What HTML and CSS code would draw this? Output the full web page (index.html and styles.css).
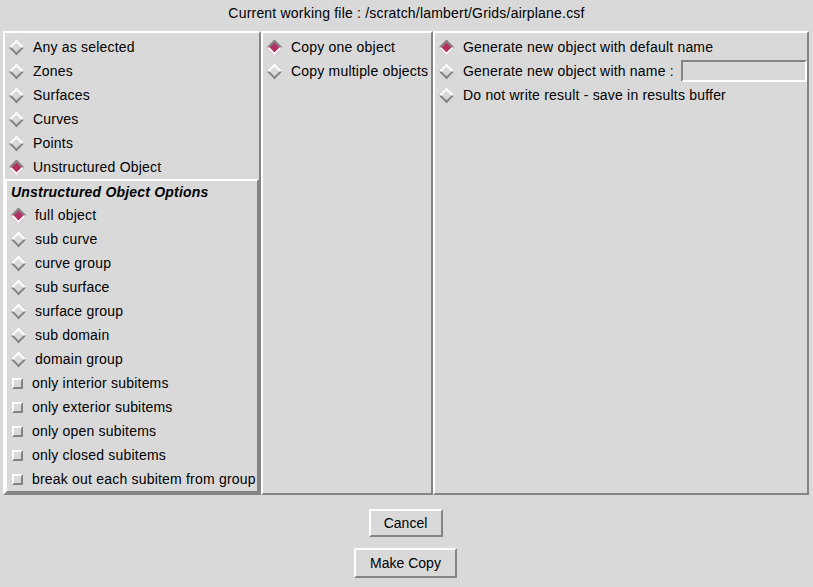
FILE: index.html
```html
<!DOCTYPE html>
<html lang="en">
<head>
    <meta charset="UTF-8">
    <title>Copy Object</title>
    <link rel="stylesheet" href="styles.css">
</head>
<body>
    <div class="title">Current working file : /scratch/lambert/Grids/airplane.csf</div>

    <div class="main">
        <div class="panel panel-left">
            <div class="list">
                <div class="item"><span class="radio"></span>Any as selected</div>
                <div class="item"><span class="radio"></span>Zones</div>
                <div class="item"><span class="radio"></span>Surfaces</div>
                <div class="item"><span class="radio"></span>Curves</div>
                <div class="item"><span class="radio"></span>Points</div>
                <div class="item"><span class="radio on"></span>Unstructured Object</div>
            </div>
            <div class="options">
                <div class="options-title">Unstructured Object Options</div>
                <div class="item"><span class="radio on"></span>full object</div>
                <div class="item"><span class="radio"></span>sub curve</div>
                <div class="item"><span class="radio"></span>curve group</div>
                <div class="item"><span class="radio"></span>sub surface</div>
                <div class="item"><span class="radio"></span>surface group</div>
                <div class="item"><span class="radio"></span>sub domain</div>
                <div class="item"><span class="radio"></span>domain group</div>
                <div class="item"><span class="check"></span>only interior subitems</div>
                <div class="item"><span class="check"></span>only exterior subitems</div>
                <div class="item"><span class="check"></span>only open subitems</div>
                <div class="item"><span class="check"></span>only closed subitems</div>
                <div class="item"><span class="check"></span>break out each subitem from group</div>
            </div>
        </div>

        <div class="panel panel-mid">
            <div class="list">
                <div class="item"><span class="radio on"></span>Copy one object</div>
                <div class="item"><span class="radio"></span>Copy multiple objects</div>
            </div>
        </div>

        <div class="panel panel-right">
            <div class="list">
                <div class="item"><span class="radio on"></span>Generate new object with default name</div>
                <div class="item"><span class="radio"></span>Generate new object with name :<input class="name-field" type="text"></div>
                <div class="item"><span class="radio"></span>Do not write result - save in results buffer</div>
            </div>
        </div>
    </div>

    <div class="buttons">
        <button class="btn btn-cancel">Cancel</button>
        <button class="btn btn-copy">Make Copy</button>
    </div>
</body>
</html>
```

FILE: styles.css
```css
body {
    margin: 0;
    font-family: "Liberation Sans", Arial, sans-serif;
    font-size: 14px;
    letter-spacing: 0.2px;
    color: #000000;
    background-color: #d9d9d9;
}

.title {
    height: 31px;
    line-height: 26px;
    text-align: center;
}

.main {
    display: flex;
    height: 464px;
    margin-left: 3px;
    width: 806px;
}

.panel {
    box-sizing: border-box;
    height: 100%;
    border: 2px solid;
    border-color: #ffffff #848484 #848484 #ffffff;
}

.panel-left {
    width: 258px;
    display: flex;
    flex-direction: column;
}

.panel-mid {
    width: 172px;
}

.panel-right {
    flex: 1;
}

.list {
    padding-top: 2px;
}

.item {
    display: flex;
    align-items: center;
    height: 24px;
    white-space: nowrap;
}

.radio {
    box-sizing: border-box;
    width: 11px;
    height: 11px;
    flex-shrink: 0;
    margin: 0 11px 0 6px;
    border: 2px solid;
    border-color: #ffffff #848484 #848484 #ffffff;
    transform: rotate(45deg);
}

.radio.on {
    background-color: #b03060;
    border-color: #848484 #ffffff #ffffff #848484;
}

.check {
    box-sizing: border-box;
    width: 11px;
    height: 11px;
    flex-shrink: 0;
    margin: 0 9px 0 5px;
    border: 2px solid;
    border-color: #ffffff #848484 #848484 #ffffff;
}

.options {
    flex: 1;
    border: 2px solid;
    border-color: #ffffff #848484 #848484 #ffffff;
}

.options-title {
    height: 22px;
    line-height: 22px;
    padding-left: 4px;
    font-weight: bold;
    font-style: italic;
}

.name-field {
    box-sizing: border-box;
    width: 126px;
    height: 22px;
    margin: 0 0 0 auto;
    padding: 0 4px;
    font: inherit;
    background-color: #d9d9d9;
    border: 2px solid;
    border-color: #848484 #ffffff #ffffff #848484;
    outline: none;
}

.buttons {
    display: flex;
    flex-direction: column;
    align-items: center;
    padding-right: 2px;
}

.btn {
    box-sizing: border-box;
    font: inherit;
    color: #000000;
    background-color: #d9d9d9;
    border: 2px solid;
    border-color: #ffffff #848484 #848484 #ffffff;
    padding: 0;
}

.btn-cancel {
    width: 74px;
    height: 28px;
    margin-top: 14px;
}

.btn-copy {
    width: 103px;
    height: 30px;
    margin-top: 11px;
}
```
